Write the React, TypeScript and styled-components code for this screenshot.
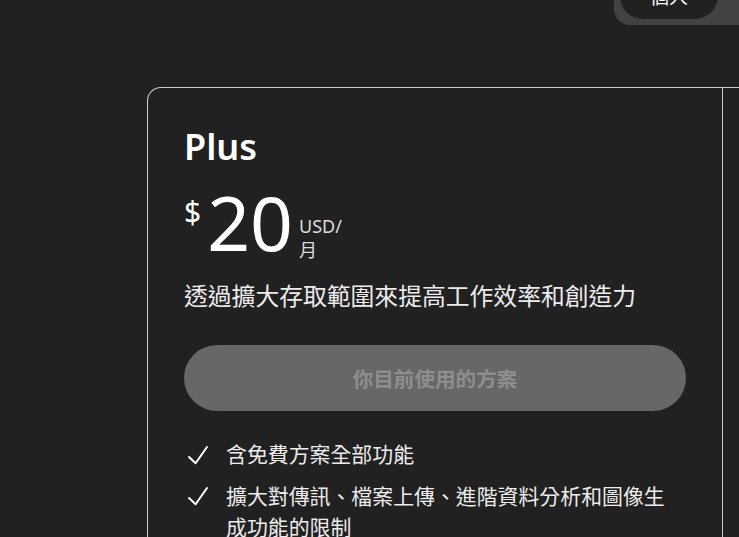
import React from 'react'
import styled, { createGlobalStyle } from 'styled-components'

const GlobalStyle = createGlobalStyle`
  html, body {
    margin: 0;
    padding: 0;
    background: #212121;
  }
  body {
    font-family: 'Noto Sans', 'Noto Sans CJK TC', sans-serif;
    color: #ececec;
  }
`

const Page = styled.div`
  width: 739px;
  height: 537px;
  overflow: hidden;
  background: #212121;
  display: flex;
  flex-direction: column;
`

const Header = styled.div`
  display: flex;
  justify-content: flex-start;
  padding-left: 614px;
  height: 25px;
`

const Segment = styled.div`
  display: flex;
  gap: 6px;
  flex-shrink: 0;
  margin-top: -33px;
  height: 58px;
  box-sizing: border-box;
  padding: 6px;
  background: #424242;
  border-radius: 16px 0 0 16px;
`

const SegmentButton = styled.div<{ $active?: boolean }>`
  width: 98px;
  height: 46px;
  border-radius: 23px;
  display: flex;
  align-items: center;
  justify-content: center;
  font-size: 19px;
  color: #ffffff;
  background: ${(p) => (p.$active ? '#212121' : 'transparent')};
`

const Plans = styled.div`
  display: flex;
  margin-top: 62px;
  padding-left: 147px;
`

const PlanCard = styled.div<{ $first?: boolean }>`
  flex-shrink: 0;
  width: 576px;
  height: 520px;
  box-sizing: border-box;
  border-top: 1px solid #cdcdcd;
  border-right: 1px solid #cdcdcd;
  border-left: ${(p) => (p.$first ? '1px solid #cdcdcd' : 'none')};
  border-radius: ${(p) => (p.$first ? '14px 0 0 0' : '0')};
  padding: 37px 36px 0 36px;
  display: flex;
  flex-direction: column;
`

const Title = styled.div`
  font-size: 36px;
  line-height: 44px;
  font-weight: 600;
  color: #ffffff;
`

const PriceRow = styled.div`
  display: flex;
  align-items: flex-start;
  margin-top: 16px;
  height: 75px;
`

const Currency = styled.span`
  font-size: 30px;
  line-height: 30px;
  margin-top: 12px;
  color: #ffffff;
`

const Amount = styled.span`
  font-size: 75px;
  line-height: 75px;
  margin-left: 6px;
  color: #ffffff;
`

const Period = styled.span`
  width: 46px;
  font-size: 18px;
  line-height: 24px;
  margin-top: 29px;
  margin-left: 6px;
  color: #dcdcdc;
`

const Description = styled.div`
  margin-top: 20px;
  font-size: 23.8px;
  line-height: 32px;
  color: #ececec;
`

const CurrentPlanButton = styled.div`
  margin-top: 33px;
  height: 66px;
  border-radius: 33px;
  background: #676767;
  color: #8e8e8e;
  font-size: 20.6px;
  font-weight: 700;
  display: flex;
  align-items: center;
  justify-content: center;
`

const Features = styled.ul`
  list-style: none;
  margin: 28px 0 0 0;
  padding: 0;
  display: flex;
  flex-direction: column;
  gap: 10px;
`

const Feature = styled.li`
  display: flex;
  align-items: flex-start;
  font-size: 20.9px;
  line-height: 31.5px;
  color: #ececec;
`

const CheckBox = styled.span`
  width: 42px;
  height: 31.5px;
  flex-shrink: 0;
  display: flex;
  align-items: center;
  padding-left: 2px;
  box-sizing: border-box;
`

const FeatureText = styled.span`
  width: 450px;
`

const Check = () => (
  <svg width="24" height="24" viewBox="0 0 24 24" fill="none">
    <path
      d="M3 14l6.6 6.3L21 4"
      stroke="#ffffff"
      strokeWidth="2"
      strokeLinecap="round"
      strokeLinejoin="round"
    />
  </svg>
)

const features = [
  '含免費方案全部功能',
  '擴大對傳訊、檔案上傳、進階資料分析和圖像生成功能的限制',
]

export default function App() {
  return (
    <Page>
      <GlobalStyle />
      <Header>
        <Segment>
          <SegmentButton $active>個人</SegmentButton>
          <SegmentButton>商務</SegmentButton>
        </Segment>
      </Header>
      <Plans>
        <PlanCard $first>
          <Title>Plus</Title>
          <PriceRow>
            <Currency>$</Currency>
            <Amount>20</Amount>
            <Period>USD/月</Period>
          </PriceRow>
          <Description>透過擴大存取範圍來提高工作效率和創造力</Description>
          <CurrentPlanButton>你目前使用的方案</CurrentPlanButton>
          <Features>
            {features.map((f) => (
              <Feature key={f}>
                <CheckBox>
                  <Check />
                </CheckBox>
                <FeatureText>{f}</FeatureText>
              </Feature>
            ))}
          </Features>
        </PlanCard>
        <PlanCard />
      </Plans>
    </Page>
  )
}
